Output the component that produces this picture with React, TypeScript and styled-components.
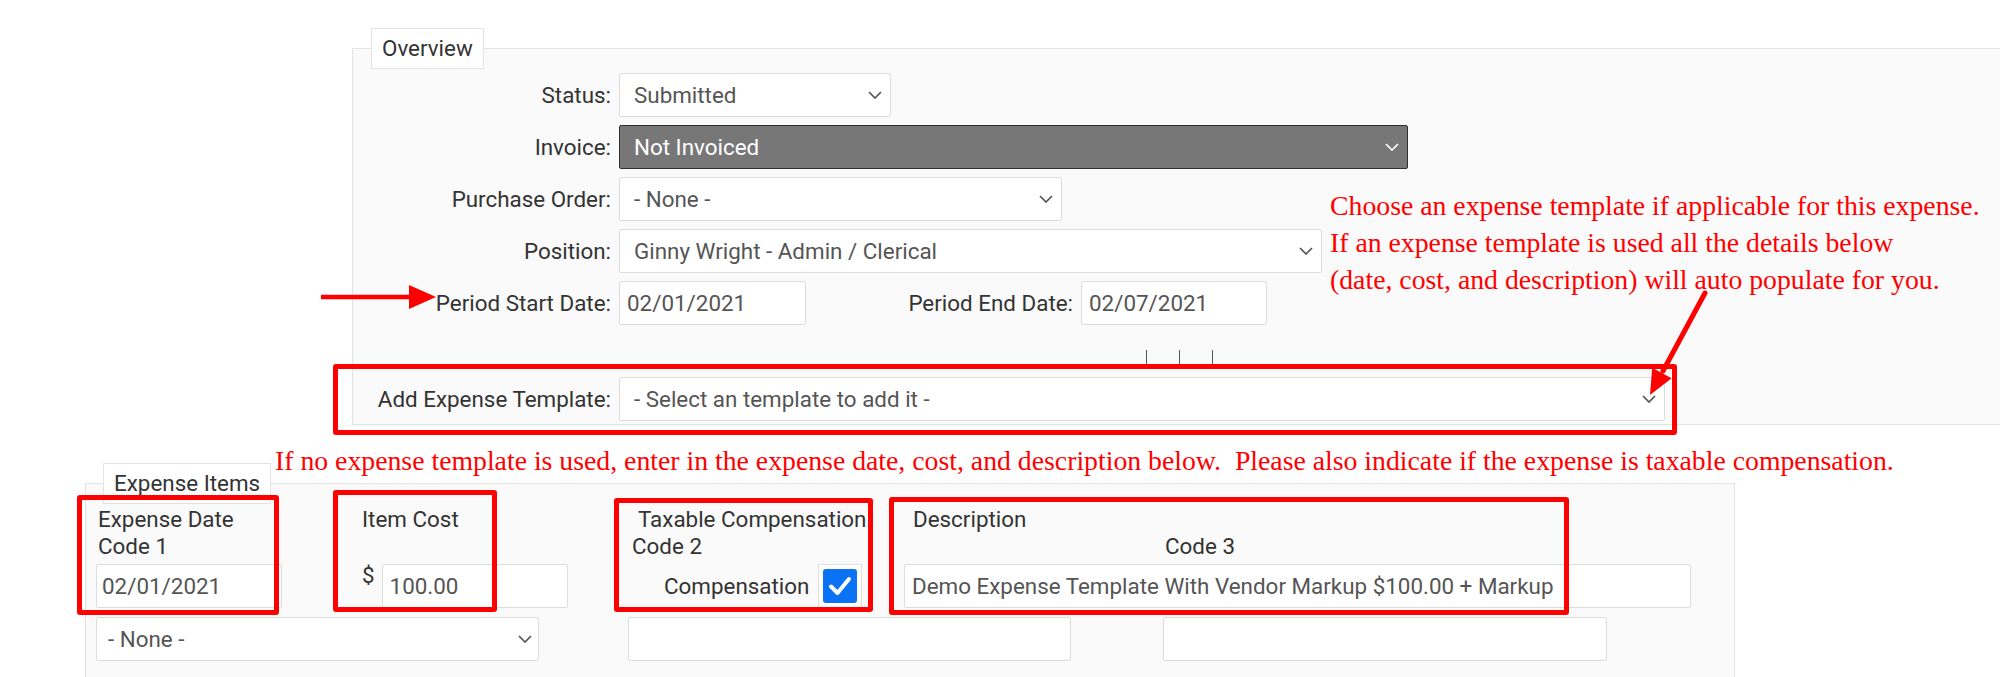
import React from "react";
import styled, { createGlobalStyle } from "styled-components";

const GlobalStyle = createGlobalStyle`
  html, body { margin: 0; padding: 0; overflow: hidden; background: #ffffff; }
  body { font-family: Roboto, "Liberation Sans", Arial, sans-serif; }
`;

const Page = styled.div`
  position: relative;
  width: 2000px;
  height: 677px;
  overflow: hidden;
  font-family: Roboto, "Liberation Sans", Arial, sans-serif;
  font-size: 22.4px;
  color: #333333;
`;

const Fieldset = styled.fieldset<{ $margin: string; $width?: number; $padding: string }>`
  display: block;
  box-sizing: border-box;
  margin: ${(p) => p.$margin};
  ${(p) => (p.$width ? `width: ${p.$width}px;` : "")}
  padding: ${(p) => p.$padding};
  border: 1px solid #e3e3e3;
  background: #fafafa;
  min-width: 0;
`;

const Legend = styled.legend<{ $offset: number }>`
  margin-left: ${(p) => p.$offset}px;
  padding: 0 10px;
  line-height: 39px;
  border: 1px solid #e3e3e3;
  background: #ffffff;
  color: #333333;
  font-size: 22.4px;
`;

const FormStack = styled.div`
  display: flex;
  flex-direction: column;
  gap: 8px;
`;

const FormRow = styled.div`
  display: flex;
  align-items: center;
`;

const RowLabel = styled.label<{ $w?: number }>`
  flex: none;
  width: ${(p) => p.$w ?? 258}px;
  margin-right: 8px;
  text-align: right;
  white-space: nowrap;
  color: #333333;
`;

const SelectBox = styled.div<{ $w: number; $dark?: boolean; $padLeft?: number; $padRight?: number }>`
  box-sizing: border-box;
  flex: none;
  width: ${(p) => p.$w}px;
  height: 44px;
  display: flex;
  align-items: center;
  justify-content: space-between;
  padding: 0 ${(p) => p.$padRight ?? 8}px 0 ${(p) => p.$padLeft ?? 14}px;
  border: 1px solid ${(p) => (p.$dark ? "#2f2f2f" : "#dcdcdc")};
  border-radius: 2px;
  background: ${(p) => (p.$dark ? "#777777" : "#ffffff")};
  color: ${(p) => (p.$dark ? "#ffffff" : "#555555")};
  white-space: nowrap;
`;

const ChevronSvg = styled.svg`
  flex: none;
  display: block;
`;

const TextInput = styled.input<{ $w: number; $pad?: number }>`
  box-sizing: border-box;
  flex: none;
  width: ${(p) => p.$w}px;
  height: 44px;
  margin: 0;
  padding: 0 ${(p) => p.$pad ?? 7}px;
  border: 1px solid #dcdcdc;
  border-radius: 2px;
  background: #ffffff;
  color: #555555;
  font-family: Roboto, "Liberation Sans", Arial, sans-serif;
  font-size: 22.4px;
  outline: none;
`;

const Pointed = styled.span`
  position: relative;
`;

const SideArrow = styled.svg`
  position: absolute;
  right: 100%;
  top: 50%;
  margin-top: -18px;
`;

const TickRow = styled.div`
  display: flex;
  gap: 32px;
  margin: 17px 0 0 793px;
  height: 19px;
`;

const Tick = styled.span`
  width: 1px;
  height: 19px;
  background: #555555;
`;

const Highlight = styled.div`
  position: relative;
  display: inline-flex;
  align-items: center;
`;

const RedFrame = styled.span<{ $x: number; $y: number; $w: number; $h: number }>`
  position: absolute;
  left: ${(p) => p.$x}px;
  top: ${(p) => p.$y}px;
  width: ${(p) => p.$w}px;
  height: ${(p) => p.$h}px;
  box-sizing: border-box;
  border: 5px solid #ff0000;
  border-radius: 3px;
  pointer-events: none;
`;

const Note = styled.div<{ $x: number; $y: number }>`
  position: absolute;
  left: ${(p) => p.$x}px;
  top: ${(p) => p.$y}px;
  font-family: "Liberation Serif", "Times New Roman", serif;
  font-size: 27.75px;
  line-height: 37px;
  color: #ff0000;
  white-space: nowrap;
`;

const Overlay = styled.svg<{ $x: number; $y: number }>`
  position: absolute;
  left: ${(p) => p.$x}px;
  top: ${(p) => p.$y}px;
  pointer-events: none;
`;

const ItemsGrid = styled.div<{ $cols: string; $top: number }>`
  display: grid;
  grid-template-columns: ${(p) => p.$cols};
  padding-left: 10px;
  margin-top: ${(p) => p.$top}px;
`;

const ItemCell = styled.div`
  position: relative;
  display: flex;
  flex-direction: column;
  align-items: flex-start;
`;

const CellLabel = styled.div`
  min-height: 54px;
  margin-bottom: 4px;
  line-height: 27px;
  color: #333333;
  white-space: nowrap;
`;

const Line = styled.span<{ $indent?: number }>`
  display: block;
  padding-left: ${(p) => p.$indent ?? 0}px;
`;

const InlineRow = styled.div<{ $gap?: number }>`
  display: flex;
  align-items: center;
  gap: ${(p) => p.$gap ?? 0}px;
`;

const Dollar = styled.span`
  align-self: flex-start;
  line-height: 27px;
  margin-top: -2px;
  color: #333333;
`;

const CompText = styled.span`
  margin-left: 32px;
  color: #333333;
`;

const CheckAddon = styled.span`
  box-sizing: border-box;
  width: 44px;
  height: 44px;
  margin-left: 9px;
  display: flex;
  align-items: center;
  justify-content: center;
  border: 1px solid #e0e0e0;
  background: #ffffff;
`;

const CheckBox = styled.span`
  width: 34px;
  height: 34px;
  border-radius: 3px;
  background: #0a72f5;
  display: flex;
  align-items: center;
  justify-content: center;
`;

const Chevron = () => (
  <ChevronSvg width={14} height={8} viewBox="0 0 14 8">
    <polyline points="1,1 7,7 13,1" fill="none" stroke="currentColor" strokeWidth={1.7} />
  </ChevronSvg>
);

const Select = ({
  w,
  dark,
  padLeft,
  padRight,
  children,
}: {
  w: number;
  dark?: boolean;
  padLeft?: number;
  padRight?: number;
  children: React.ReactNode;
}) => (
  <SelectBox $w={w} $dark={dark} $padLeft={padLeft} $padRight={padRight}>
    <span>{children}</span>
    <Chevron />
  </SelectBox>
);

export default function App() {
  return (
    <Page>
      <GlobalStyle />
      <Fieldset $margin="28px -20px 0 352px" $padding="4px 0 3px 0">
        <Legend $offset={18}>Overview</Legend>
        <FormStack>
          <FormRow>
            <RowLabel>Status:</RowLabel>
            <Select w={272}>Submitted</Select>
          </FormRow>
          <FormRow>
            <RowLabel>Invoice:</RowLabel>
            <Select w={789} dark>
              Not Invoiced
            </Select>
          </FormRow>
          <FormRow>
            <RowLabel>Purchase Order:</RowLabel>
            <Select w={443}>- None -</Select>
          </FormRow>
          <FormRow>
            <RowLabel>Position:</RowLabel>
            <Select w={703}>Ginny Wright - Admin / Clerical</Select>
          </FormRow>
          <FormRow>
            <RowLabel>
              <Pointed>
                Period Start Date:
                <SideArrow width={115} height={24} viewBox="0 0 115 24">
                  <line x1={0} y1={12} x2={92} y2={12} stroke="#ff0000" strokeWidth={4.5} strokeLinecap="round" />
                  <polygon points="88,0 115,12 88,24" fill="#ff0000" />
                </SideArrow>
              </Pointed>
            </RowLabel>
            <TextInput $w={187} readOnly defaultValue="02/01/2021" />
            <RowLabel $w={267}>Period End Date:</RowLabel>
            <TextInput $w={186} readOnly defaultValue="02/07/2021" />
          </FormRow>
          <TickRow>
            <Tick />
            <Tick />
            <Tick />
          </TickRow>
          <FormRow>
            <Highlight>
              <RowLabel>Add Expense Template:</RowLabel>
              <Select w={1046}>- Select an template to add it -</Select>
              <RedFrame $x={-20} $y={-13} $w={1344} $h={71} />
            </Highlight>
          </FormRow>
        </FormStack>
      </Fieldset>

      <Fieldset $margin="38px 0 0 85px" $width={1650} $padding="2px 0 60px 0">
        <Legend $offset={17}>Expense Items</Legend>
        <ItemsGrid $cols="266px 270px 272px 787px" $top={0}>
          <ItemCell>
            <CellLabel>
              <Line $indent={2}>Expense Date</Line>
              <Line $indent={2}>Code 1</Line>
            </CellLabel>
            <TextInput $w={186} $pad={5} readOnly defaultValue="02/01/2021" />
            <RedFrame $x={-19} $y={-11} $w={202} $h={120} />
          </ItemCell>
          <ItemCell>
            <CellLabel>
              <Line>Item Cost</Line>
            </CellLabel>
            <InlineRow $gap={7}>
              <Dollar>$</Dollar>
              <TextInput $w={186} readOnly defaultValue="100.00" />
            </InlineRow>
            <RedFrame $x={-29} $y={-16} $w={164} $h={122} />
          </ItemCell>
          <ItemCell>
            <CellLabel>
              <Line $indent={6}>Taxable Compensation</Line>
              <Line>Code 2</Line>
            </CellLabel>
            <InlineRow>
              <CompText>Compensation</CompText>
              <CheckAddon>
                <CheckBox>
                  <svg width={24} height={20} viewBox="0 0 24 20">
                    <polyline
                      points="3,10.5 9.5,17 21,3"
                      fill="none"
                      stroke="#ffffff"
                      strokeWidth={4}
                      strokeLinecap="round"
                      strokeLinejoin="round"
                    />
                  </svg>
                </CheckBox>
              </CheckAddon>
            </InlineRow>
            <RedFrame $x={-18} $y={-8} $w={259} $h={114} />
          </ItemCell>
          <ItemCell>
            <CellLabel>
              <Line $indent={9}>Description</Line>
              <Line $indent={261}>Code 3</Line>
            </CellLabel>
            <TextInput
              $w={787}
              readOnly
              defaultValue="Demo Expense Template With Vendor Markup $100.00 + Markup"
            />
            <RedFrame $x={-15} $y={-9} $w={680} $h={118} />
          </ItemCell>
        </ItemsGrid>
        <ItemsGrid $cols="532px 535px 444px" $top={9}>
          <Select w={443} padLeft={11} padRight={6}>
            - None -
          </Select>
          <TextInput $w={443} readOnly defaultValue="" />
          <TextInput $w={444} readOnly defaultValue="" />
        </ItemsGrid>
      </Fieldset>

      <Note $x={1330} $y={187}>
        Choose an expense template if applicable for this expense.
        <br />
        If an expense template is used all the details below
        <br />
        (date, cost, and description) will auto populate for you.
      </Note>
      <Overlay $x={1640} $y={285} width={75} height={120} viewBox="0 0 75 120">
        <line x1={65} y1={8} x2={23} y2={86} stroke="#ff0000" strokeWidth={5} strokeLinecap="round" />
        <polygon points="10,110 31.6,93.2 12.2,82.8" fill="#ff0000" />
      </Overlay>
      <Note $x={275} $y={442}>
        If no expense template is used, enter in the expense date, cost, and description below.{"\u00a0"} Please also
        indicate if the expense is taxable compensation.
      </Note>
    </Page>
  );
}
